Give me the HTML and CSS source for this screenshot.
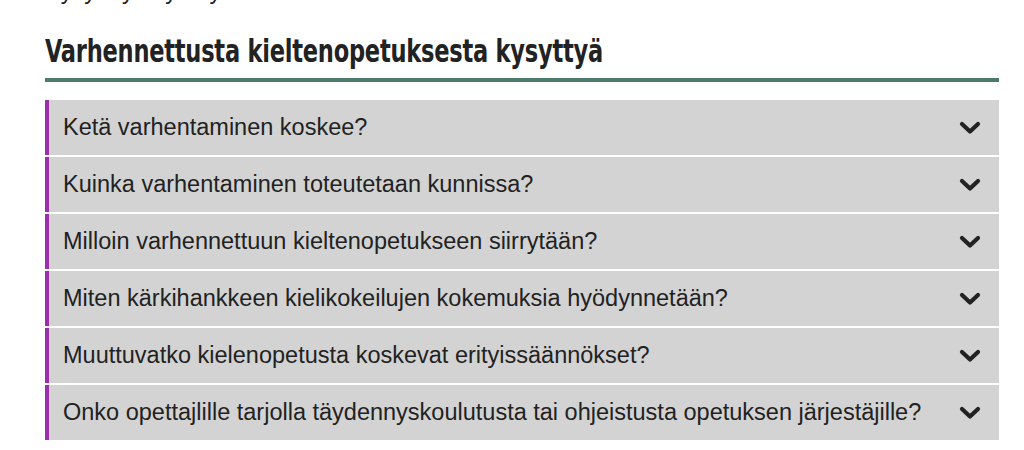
FILE: index.html
```html
<!DOCTYPE html>
<html lang="fi">
<head>
<meta charset="utf-8">
<title>Varhennettusta kieltenopetuksesta kysyttyä</title>
<link rel="stylesheet" href="styles.css">
</head>
<body>
  <div class="content">
    <p class="prev-text">Kysy myös yhteyshenkilöltä</p>

    <h2 class="faq-title"><span class="faq-title-text">Varhennettusta kieltenopetuksesta kysyttyä</span></h2>

    <div class="faq-list">
      <div class="faq-item">
        <span class="faq-question">Ketä varhentaminen koskee?</span>
        <svg class="chevron" viewBox="0 0 22 14"><polyline points="3,3 11,10.5 19,3"/></svg>
      </div>
      <div class="faq-item">
        <span class="faq-question">Kuinka varhentaminen toteutetaan kunnissa?</span>
        <svg class="chevron" viewBox="0 0 22 14"><polyline points="3,3 11,10.5 19,3"/></svg>
      </div>
      <div class="faq-item">
        <span class="faq-question">Milloin varhennettuun kieltenopetukseen siirrytään?</span>
        <svg class="chevron" viewBox="0 0 22 14"><polyline points="3,3 11,10.5 19,3"/></svg>
      </div>
      <div class="faq-item">
        <span class="faq-question">Miten kärkihankkeen kielikokeilujen kokemuksia hyödynnetään?</span>
        <svg class="chevron" viewBox="0 0 22 14"><polyline points="3,3 11,10.5 19,3"/></svg>
      </div>
      <div class="faq-item">
        <span class="faq-question">Muuttuvatko kielenopetusta koskevat erityissäännökset?</span>
        <svg class="chevron" viewBox="0 0 22 14"><polyline points="3,3 11,10.5 19,3"/></svg>
      </div>
      <div class="faq-item">
        <span class="faq-question">Onko opettajlille tarjolla täydennyskoulutusta tai ohjeistusta opetuksen järjestäjille?</span>
        <svg class="chevron" viewBox="0 0 22 14"><polyline points="3,3 11,10.5 19,3"/></svg>
      </div>
    </div>
  </div>
</body>
</html>
```

FILE: styles.css
```css
html {
  height: 100%;
  overflow: hidden;
}
body {
  margin: 0;
  background: white;
  color: #222;
  font-family: "Liberation Sans", Arial, Helvetica, sans-serif;
}
.content {
  width: 954px;
  margin: 0 0 0 45px;
}
.prev-text {
  margin: -22px 0 0 0;
  font-size: 23.5px;
  line-height: 26px;
  height: 26px;
  overflow: hidden;
}
.faq-title {
  margin: 29px 0 0 0;
  padding-bottom: 8px;
  border-bottom: 4px solid #4b7b6a;
  font-family: "DejaVu Sans", sans-serif;
  font-stretch: condensed;
  font-weight: 600;
  font-size: 32px;
  line-height: 37px;
  color: #222;
}
.faq-title-text {
  display: inline-block;
  transform: scaleX(0.783);
  transform-origin: left center;
  letter-spacing: -0.3px;
}
.faq-list {
  margin-top: 18px;
  display: flex;
  flex-direction: column;
  gap: 2px;
}
.faq-item {
  display: flex;
  align-items: center;
  justify-content: space-between;
  height: 55px;
  padding: 0 18px 0 14px;
  background: #d3d3d3;
  border-left: 4px solid #9b2fae;
}
.faq-question {
  font-size: 23.5px;
  color: #222;
}
.chevron {
  width: 22px;
  height: 14px;
  fill: none;
  stroke: #222;
  stroke-width: 4.2;
  stroke-linecap: round;
  stroke-linejoin: round;
}
```
